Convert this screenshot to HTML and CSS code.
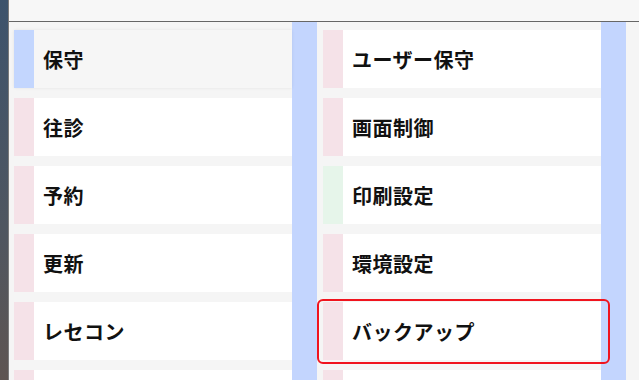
FILE: index.html
```html
<!DOCTYPE html>
<html lang="ja">
<head>
    <meta charset="UTF-8">
    <meta name="viewport" content="width=device-width, initial-scale=1.0">
    <title>メニュー</title>
    <link rel="stylesheet" href="styles.css">
</head>
<body>
    <div class="desktop"></div>

    <div class="window">
        <div class="title-bar"></div>

        <div class="menu-area">
            <div class="menu-col">
                <div class="menu-list">
                    <div class="menu-item selected"><span class="tag tag-blue"></span><span class="label">保守</span></div>
                    <div class="menu-item"><span class="tag tag-pink"></span><span class="label">往診</span></div>
                    <div class="menu-item"><span class="tag tag-pink"></span><span class="label">予約</span></div>
                    <div class="menu-item"><span class="tag tag-pink"></span><span class="label">更新</span></div>
                    <div class="menu-item"><span class="tag tag-pink"></span><span class="label">レセコン</span></div>
                    <div class="menu-item"><span class="tag tag-pink"></span><span class="label"></span></div>
                </div>
                <div class="scroll-bar"></div>
            </div>

            <div class="menu-col">
                <div class="menu-list">
                    <div class="menu-item"><span class="tag tag-pink"></span><span class="label">ユーザー保守</span></div>
                    <div class="menu-item"><span class="tag tag-pink"></span><span class="label">画面制御</span></div>
                    <div class="menu-item"><span class="tag tag-green"></span><span class="label">印刷設定</span></div>
                    <div class="menu-item"><span class="tag tag-pink"></span><span class="label">環境設定</span></div>
                    <div class="menu-item focused"><span class="tag tag-pink"></span><span class="label">バックアップ</span></div>
                    <div class="menu-item"><span class="tag tag-pink"></span><span class="label"></span></div>
                </div>
                <div class="scroll-bar"></div>
            </div>
        </div>
    </div>
</body>
</html>
```

FILE: styles.css
```css
html, body {
    margin: 0;
    height: 100%;
    overflow: hidden;
}

body {
    display: flex;
    font-family: "Noto Sans CJK JP", "Noto Sans", sans-serif;
    background-color: #f5f5f5;
}

.desktop {
    width: 8px;
    flex-shrink: 0;
    background: linear-gradient(to bottom, #3d536c, #4f5660 60%, #5e5552);
}

.window {
    flex: 1;
    display: flex;
    flex-direction: column;
    border-left: 1px solid #7a7a7a;
    background-color: #f5f5f5;
    min-width: 0;
}

.title-bar {
    height: 21px;
    flex-shrink: 0;
    background-color: #f7f7f7;
    border-bottom: 1px solid #666;
}

.menu-area {
    flex: 1;
    display: flex;
    gap: 6px;
    padding-left: 5px;
}

.menu-col {
    display: flex;
}

.menu-list {
    width: 278px;
    display: flex;
    flex-direction: column;
    gap: 10px;
    padding-top: 8px;
}

.scroll-bar {
    width: 25px;
    background-color: #c3d5fe;
}

.menu-item {
    position: relative;
    height: 58px;
    flex-shrink: 0;
    display: flex;
    align-items: center;
    background-color: #fff;
}

.menu-item.selected {
    background-color: #f6f6f6;
    box-shadow: 0 0 3px rgba(0, 0, 0, 0.08);
}

.menu-item.focused::after {
    content: "";
    position: absolute;
    top: -3px;
    left: -6px;
    right: -9px;
    bottom: -4px;
    border: 2px solid #f0141e;
    border-radius: 6px;
    z-index: 2;
}

.tag {
    width: 20px;
    align-self: stretch;
    flex-shrink: 0;
}

.tag-pink {
    background-color: #f5e2e8;
}

.tag-blue {
    background-color: #c3d6fe;
}

.tag-green {
    background-color: #e6f5ea;
}

.label {
    padding-left: 9px;
    font-size: 20px;
    font-weight: 700;
    color: #111;
    letter-spacing: 0.5px;
}
```
